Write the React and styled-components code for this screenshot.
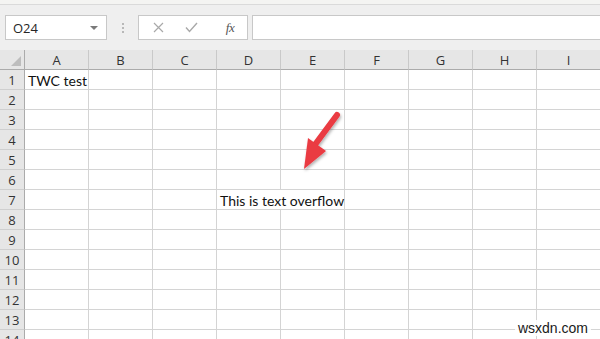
import React from "react";
import styled, { createGlobalStyle } from "styled-components";

const Global = createGlobalStyle`
  html, body { margin: 0; padding: 0; background: #fff; }
  body { width: 600px; height: 339px; overflow: hidden; font-family: "Open Sans", "Liberation Sans", sans-serif; }
`;

const Page = styled.div`
  position: relative;
  width: 600px;
  height: 339px;
  overflow: hidden;
  display: flex;
  flex-direction: column;
  background: #f3f3f3;
`;

const TopStrip = styled.div`
  height: 4px;
  background: #f4f4f2;
  border-bottom: 1px solid #dadada;
  flex: none;
`;

const Toolbar = styled.div`
  height: 45px;
  flex: none;
  display: flex;
  align-items: flex-start;
  padding: 10px 0 0 5px;
  box-sizing: border-box;
  background: #efefef;
`;

const Box = styled.div`
  height: 25px;
  box-sizing: border-box;
  background: #fff;
  border: 1px solid #c8c8c8;
  display: flex;
  align-items: center;
`;

const NameBox = styled(Box)`
  width: 102px;
  padding: 0 6px 0 7px;
  justify-content: space-between;
  font-size: 13px;
  color: #262626;
`;

const Caret = styled.span`
  width: 0;
  height: 0;
  border-left: 4px solid transparent;
  border-right: 4px solid transparent;
  border-top: 4px solid #7a7a7a;
  margin-right: 2px;
`;

const Grip = styled.div`
  width: 31px;
  height: 25px;
  display: flex;
  flex-direction: column;
  align-items: center;
  justify-content: center;
  gap: 2px;
  span {
    width: 2px;
    height: 2px;
    background: #b8b8b8;
  }
`;

const FxBox = styled(Box)`
  width: 110px;
  padding: 0 0 0 12px;
`;

const IconSlot = styled.div`
  width: ${(p) => p.w}px;
  display: flex;
  align-items: center;
  justify-content: center;
`;

const FxText = styled.span`
  font-family: "Liberation Serif", "DejaVu Serif", serif;
  font-style: italic;
  font-size: 13px;
  color: #555;
  letter-spacing: -0.5px;
`;

const Formula = styled(Box)`
  flex: 1;
  margin-left: 4px;
  border-right: none;
`;

const Sheet = styled.div`
  position: relative;
  display: grid;
  grid-template-columns: 25px repeat(9, 64px);
  grid-auto-rows: 20px;
  background: #fff;
  flex: none;
`;

const ColHead = styled.div`
  background: #e6e6e6;
  border-bottom: 1px solid #ababab;
  border-right: 1px solid ${(p) => (p.corner ? "#ababab" : "#c9c9c9")};
  box-sizing: border-box;
  display: flex;
  align-items: center;
  justify-content: center;
  font-size: 13px;
  color: #333;
  position: relative;
  padding-top: 1px;
`;

const Corner = styled.span`
  position: absolute;
  right: 3px;
  bottom: 3px;
  width: 0;
  height: 0;
  border-left: 10px solid transparent;
  border-bottom: 10px solid #bdbdbd;
`;

const RowHead = styled.div`
  background: #e6e6e6;
  border-right: 1px solid #ababab;
  border-bottom: 1px solid #cfcfcf;
  box-sizing: border-box;
  display: flex;
  align-items: center;
  justify-content: center;
  font-size: 13px;
  color: #333;
`;

const Cell = styled.div`
  border-right: 1px solid #d4d4d4;
  border-bottom: 1px solid #d4d4d4;
  box-sizing: border-box;
  grid-column: span ${(p) => p.span || 1};
  display: flex;
  align-items: center;
  padding: 1px 0 0 3px;
  font-family: "Lato", "Liberation Sans", sans-serif;
  font-size: 14px;
  color: #111;
  white-space: nowrap;
  overflow: visible;
`;

const Arrow = styled.svg`
  position: absolute;
  left: 290px;
  top: 52px;
  overflow: visible;
`;

const Watermark = styled.div`
  position: absolute;
  right: 9px;
  top: 320px;
  font-family: "Liberation Sans", Arial, sans-serif;
  font-size: 14px;
  line-height: 16px;
  color: #1a1a1a;
  background: rgba(255, 255, 255, 0.85);
  padding: 0 3px;
`;

const cols = ["A", "B", "C", "D", "E", "F", "G", "H", "I"];
const rows = Array.from({ length: 14 }, (_, i) => i + 1);

function Row({ n }) {
  const cells = [];
  if (n === 7) {
    cols.forEach((c) => {
      if (c === "D") cells.push(<Cell key={c} span={2}>This is text overflow</Cell>);
      else if (c !== "E") cells.push(<Cell key={c} />);
    });
  } else {
    cols.forEach((c) => cells.push(<Cell key={c}>{n === 1 && c === "A" ? "TWC test" : ""}</Cell>));
  }
  return (
    <>
      <RowHead>{n}</RowHead>
      {cells}
    </>
  );
}

export default function App() {
  return (
    <Page>
      <Global />
      <TopStrip />
      <Toolbar>
        <NameBox>
          <span>O24</span>
          <Caret />
        </NameBox>
        <Grip>
          <span />
          <span />
          <span />
        </Grip>
        <FxBox>
          <IconSlot w={14}>
            <svg width="11" height="11" viewBox="0 0 11 11">
              <path d="M1 1 L10 10 M10 1 L1 10" stroke="#a9a9a9" strokeWidth="1.2" />
            </svg>
          </IconSlot>
          <IconSlot w={52}>
            <svg width="13" height="11" viewBox="0 0 13 11">
              <path d="M1 5.5 L4.5 9.5 L12 1" stroke="#a9a9a9" strokeWidth="1.4" fill="none" />
            </svg>
          </IconSlot>
          <IconSlot w={26}>
            <FxText>fx</FxText>
          </IconSlot>
        </FxBox>
        <Formula />
      </Toolbar>
      <Sheet>
        <ColHead corner>
          <Corner />
        </ColHead>
        {cols.map((c) => (
          <ColHead key={c}>{c}</ColHead>
        ))}
        {rows.map((n) => (
          <Row key={n} n={n} />
        ))}
        <Arrow width="60" height="70" viewBox="0 0 60 70">
          <defs>
            <filter id="sh" x="-30%" y="-30%" width="160%" height="160%">
              <feDropShadow dx="1" dy="2" stdDeviation="1.5" floodColor="#000" floodOpacity="0.3" />
            </filter>
          </defs>
          <g filter="url(#sh)">
            <path d="M47 13 L24 44" stroke="#ea3a42" strokeWidth="6" strokeLinecap="round" fill="none" />
            <path d="M14 67 L18 36 L36 49 Z" fill="#ea3a42" />
          </g>
        </Arrow>
      </Sheet>
      <Watermark>wsxdn.com</Watermark>
    </Page>
  );
}
